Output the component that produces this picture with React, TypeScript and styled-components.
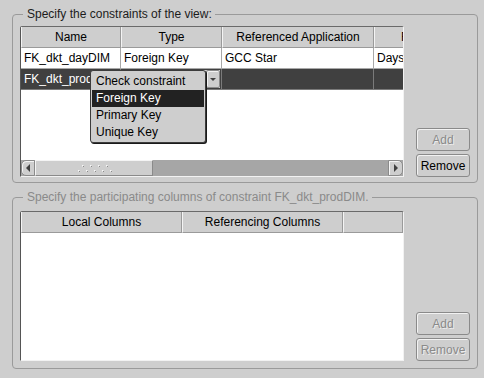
import React from 'react';
import styled, { createGlobalStyle } from 'styled-components';

const GlobalStyle = createGlobalStyle`
  html, body {
    margin: 0;
    padding: 0;
    background: #cecece;
  }
  body {
    font-family: "Liberation Sans", Arial, sans-serif;
    font-size: 12px;
    color: #000;
  }
`;

const Page = styled.div`
  width: 484px;
  height: 378px;
  box-sizing: border-box;
  padding: 7px 0 0 12px;
  display: flex;
  flex-direction: column;
  gap: 7px;
  background: #cecece;
  overflow: hidden;
`;

const Group = styled.fieldset<{ $top: number; $bottom: number }>`
  margin: 0;
  min-width: 0;
  width: 466px;
  box-sizing: border-box;
  border: 1px solid #9a9a9a;
  border-radius: 4px;
  padding: ${(p) => p.$top}px 7px ${(p) => p.$bottom}px 7px;
`;

const Legend = styled.legend<{ $dim?: boolean }>`
  margin-left: 3px;
  padding: 0 3px 0 4px;
  line-height: 14px;
  color: ${(p) => (p.$dim ? '#8a8a8a' : '#1c1c1c')};
`;

const GroupBody = styled.div`
  display: flex;
  align-items: flex-end;
  gap: 12px;
`;

const Frame = styled.div<{ $height: number }>`
  position: relative;
  width: 384px;
  height: ${(p) => p.$height}px;
  box-sizing: border-box;
  flex: none;
  border-top: 1px solid #6a6a6a;
  border-left: 1px solid #555;
  border-right: 1px solid #f2f2f2;
  border-bottom: 1px solid #f2f2f2;
  border-radius: 2px 2px 0 0;
  background: #fff;
  display: flex;
  flex-direction: column;
`;

const Viewport = styled.div`
  flex: 1;
  overflow: hidden;
  background: #fff;
`;

const HeaderRow = styled.div`
  display: flex;
  height: 21px;
  background: #cecece;
`;

const HeaderCell = styled.div<{ $w: number }>`
  flex: none;
  width: ${(p) => p.$w}px;
  box-sizing: border-box;
  border-left: 1px solid #f4f4f4;
  border-right: 1px solid #9a9a9a;
  border-bottom: 1px solid #9a9a9a;
  text-align: center;
  line-height: 20px;
  white-space: nowrap;
  overflow: hidden;
`;

const BodyRow = styled.div<{ $selected?: boolean }>`
  display: flex;
  height: 21px;
  background: ${(p) => (p.$selected ? '#404040' : '#fff')};
  color: ${(p) => (p.$selected ? '#fff' : '#000')};
`;

const Cell = styled.div<{ $w: number; $selected?: boolean; $editor?: boolean }>`
  flex: none;
  width: ${(p) => p.$w}px;
  box-sizing: border-box;
  border-right: 1px solid ${(p) => (p.$selected ? '#7a7a7a' : '#a8a8a8')};
  border-bottom: 1px solid ${(p) => (p.$selected ? '#7a7a7a' : '#a8a8a8')};
  padding: ${(p) => (p.$editor ? '1px 1px 1px 0' : '0 3px')};
  line-height: 20px;
  white-space: nowrap;
  overflow: hidden;
`;

const Combo = styled.div`
  display: flex;
  height: 100%;
  background: #cecece;
`;

const ComboField = styled.div`
  flex: 1;
`;

const ComboArrow = styled.div`
  width: 14px;
  box-sizing: border-box;
  border: 1px solid #8a8a8a;
  border-radius: 2px;
  box-shadow: inset 1px 1px 0 #f2f2f2;
  display: flex;
  align-items: center;
  justify-content: center;
`;

const DownTriangle = styled.span`
  width: 0;
  height: 0;
  border-left: 3px solid transparent;
  border-right: 3px solid transparent;
  border-top: 3px solid #404040;
`;

const Popup = styled.div`
  position: absolute;
  left: 69px;
  top: 43px;
  width: 116px;
  height: 73px;
  box-sizing: border-box;
  padding: 2px 1px 1px 1px;
  background: #cecece;
  border: 1px solid #3c3c3c;
  border-radius: 3px;
  box-shadow: 1px 1px 0 #1a1a1a;
  z-index: 2;
`;

const PopupItem = styled.div<{ $active?: boolean }>`
  height: 17px;
  line-height: 17px;
  padding-left: 4px;
  white-space: nowrap;
  background: ${(p) => (p.$active ? '#222' : 'transparent')};
  color: ${(p) => (p.$active ? '#fff' : '#000')};
`;

const Scrollbar = styled.div`
  display: flex;
  height: 16px;
  flex: none;
  background: #a6a6a6;
`;

const ScrollButton = styled.div<{ $w: number; $side: 'left' | 'right' }>`
  flex: none;
  width: ${(p) => p.$w}px;
  box-sizing: border-box;
  background: #cecece;
  border: 1px solid #8a8a8a;
  border-radius: ${(p) => (p.$side === 'left' ? '5px 0 0 5px' : '0 5px 5px 0')};
  box-shadow: inset 1px 1px 0 #f4f4f4;
  display: flex;
  align-items: center;
  justify-content: center;
`;

const SideTriangle = styled.span<{ $dir: 'left' | 'right' }>`
  width: 0;
  height: 0;
  border-top: 4px solid transparent;
  border-bottom: 4px solid transparent;
  ${(p) => (p.$dir === 'left' ? 'border-right: 4px solid #404040;' : 'border-left: 4px solid #404040;')}
`;

const Thumb = styled.div<{ $w: number }>`
  flex: none;
  width: ${(p) => p.$w}px;
  box-sizing: border-box;
  background: #cecece;
  border-top: 1px solid #f4f4f4;
  border-left: 1px solid #f4f4f4;
  border-right: 1px solid #8a8a8a;
  border-bottom: 1px solid #8a8a8a;
  display: flex;
  align-items: center;
  justify-content: center;
`;

const ButtonColumn = styled.div`
  display: flex;
  flex-direction: column;
  gap: 3px;
`;

const Button = styled.button<{ $dim?: boolean }>`
  width: 54px;
  height: 23px;
  box-sizing: border-box;
  margin: 0;
  padding: 0;
  font-family: inherit;
  font-size: 12px;
  background: #cecece;
  border: 1px solid #8a8a8a;
  border-radius: 3px;
  box-shadow: inset 1px 1px 0 #f2f2f2;
  color: ${(p) => (p.$dim ? '#8a8a8a' : '#000')};
  text-shadow: ${(p) => (p.$dim ? '1px 1px 0 #ececec' : 'none')};
`;

const Grip = () => (
  <svg width="36" height="9" viewBox="0 0 36 9">
    {[6, 14, 22, 30].map((x) => (
      <rect key={`a${x}`} x={x} y={1} width={1.5} height={1.5} fill="#f6f6f6" />
    ))}
    {[2, 10, 18, 26, 34].map((x) => (
      <rect key={`b${x}`} x={x} y={6} width={1.5} height={1.5} fill="#f6f6f6" />
    ))}
    {[6, 14, 22, 30].map((x) => (
      <rect key={`c${x}`} x={x + 1} y={2} width={1} height={1} fill="#8a8a8a" />
    ))}
    {[2, 10, 18, 26, 34].map((x) => (
      <rect key={`d${x}`} x={x + 1} y={7} width={1} height={1} fill="#8a8a8a" />
    ))}
  </svg>
);

const constraintCols = [100, 101, 152, 176];
const columnCols = [161, 161, 60];

export default function App() {
  return (
    <>
      <GlobalStyle />
      <Page>
        <Group $top={5} $bottom={5}>
          <Legend>Specify the constraints of the view:</Legend>
          <GroupBody>
            <Frame $height={151}>
              <Viewport>
                <HeaderRow>
                  {['Name', 'Type', 'Referenced Application', 'Referenced Dimension'].map((h, i) => (
                    <HeaderCell key={h} $w={constraintCols[i]}>{h}</HeaderCell>
                  ))}
                </HeaderRow>
                <BodyRow>
                  <Cell $w={constraintCols[0]}>FK_dkt_dayDIM</Cell>
                  <Cell $w={constraintCols[1]}>Foreign Key</Cell>
                  <Cell $w={constraintCols[2]}>GCC Star</Cell>
                  <Cell $w={constraintCols[3]}>DaysDIM</Cell>
                </BodyRow>
                <BodyRow $selected>
                  <Cell $w={constraintCols[0]} $selected>FK_dkt_prodDIM</Cell>
                  <Cell $w={constraintCols[1]} $selected $editor>
                    <Combo>
                      <ComboField />
                      <ComboArrow>
                        <DownTriangle />
                      </ComboArrow>
                    </Combo>
                  </Cell>
                  <Cell $w={constraintCols[2]} $selected />
                  <Cell $w={constraintCols[3]} $selected />
                </BodyRow>
              </Viewport>
              <Scrollbar>
                <ScrollButton $w={14} $side="left">
                  <SideTriangle $dir="left" />
                </ScrollButton>
                <Thumb $w={118}>
                  <Grip />
                </Thumb>
                <div style={{ flex: 1 }} />
                <ScrollButton $w={15} $side="right">
                  <SideTriangle $dir="right" />
                </ScrollButton>
              </Scrollbar>
              <Popup>
                <PopupItem>Check constraint</PopupItem>
                <PopupItem $active>Foreign Key</PopupItem>
                <PopupItem>Primary Key</PopupItem>
                <PopupItem>Unique Key</PopupItem>
              </Popup>
            </Frame>
            <ButtonColumn>
              <Button $dim>Add</Button>
              <Button>Remove</Button>
            </ButtonColumn>
          </GroupBody>
        </Group>

        <Group $top={7} $bottom={7}>
          <Legend $dim>Specify the participating columns of constraint FK_dkt_prodDIM.</Legend>
          <GroupBody>
            <Frame $height={150}>
              <Viewport>
                <HeaderRow>
                  {['Local Columns', 'Referencing Columns', ''].map((h, i) => (
                    <HeaderCell key={i} $w={columnCols[i]}>{h}</HeaderCell>
                  ))}
                </HeaderRow>
              </Viewport>
            </Frame>
            <ButtonColumn>
              <Button $dim>Add</Button>
              <Button $dim>Remove</Button>
            </ButtonColumn>
          </GroupBody>
        </Group>
      </Page>
    </>
  );
}
